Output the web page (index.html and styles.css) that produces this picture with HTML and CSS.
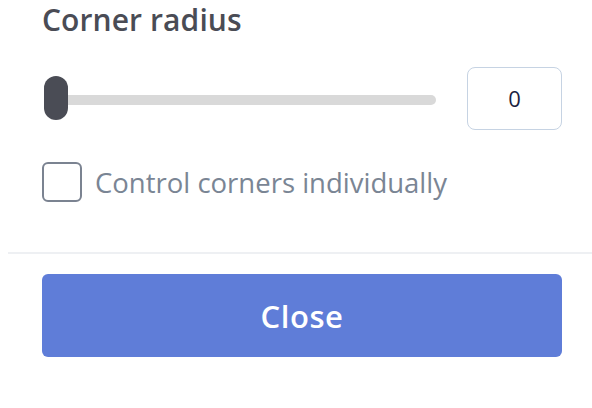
FILE: index.html
```html
<!DOCTYPE html>
<html>
<head>
<meta charset="utf-8">
<link rel="stylesheet" href="styles.css">
</head>
<body>
<div class="panel">
  <section class="section">
    <h2 class="title">Corner radius</h2>
    <div class="slider-row">
      <div class="slider">
        <div class="track"></div>
        <div class="thumb"></div>
      </div>
      <div class="num-input">0</div>
    </div>
    <label class="check-row">
      <span class="checkbox"></span>
      <span class="check-label">Control corners individually</span>
    </label>
  </section>
  <div class="divider"></div>
  <div class="footer">
    <button class="btn-close">Close</button>
  </div>
</div>
</body>
</html>
```

FILE: styles.css
```css
html, body {
  margin: 0;
  padding: 0;
  background: #ffffff;
}
body {
  font-family: "Open Sans", "Noto Sans", sans-serif;
  width: 592px;
  height: 408px;
  overflow: hidden;
}
.panel {
  padding-left: 8px;
}
.section {
  padding: 0 30px 0 34px;
}
.title {
  margin: 0;
  font-size: 30px;
  line-height: 40px;
  font-weight: 600;
  color: #4a4c55;
  letter-spacing: 0.1px;
}
.slider-row {
  display: flex;
  align-items: center;
  margin-top: 26px;
  height: 64px;
}
.slider {
  position: relative;
  width: 392px;
  height: 44px;
  margin-left: 2px;
  display: flex;
  align-items: center;
}
.track {
  width: 100%;
  height: 10px;
  margin-top: 3px;
  border-radius: 5px;
  background: #d9d9d9;
}
.thumb {
  position: absolute;
  left: 0;
  top: 0;
  width: 24px;
  height: 44px;
  border-radius: 12px;
  background: #4a4c55;
}
.num-input {
  margin-left: auto;
  width: 93px;
  height: 61px;
  box-sizing: content-box;
  border: 1.5px solid #c6d3e3;
  border-radius: 8px;
  display: flex;
  align-items: center;
  justify-content: center;
  font-size: 22px;
  color: #1d1f42;
}
.check-row {
  display: flex;
  align-items: center;
  margin-top: 32px;
  height: 40px;
}
.checkbox {
  width: 36px;
  height: 36px;
  border: 2px solid #7b8391;
  border-radius: 6px;
  flex: none;
}
.check-label {
  margin-left: 13px;
  font-size: 27.5px;
  color: #7a8594;
}
.divider {
  margin-top: 50px;
  height: 2px;
  background: #eef0f3;
}
.footer {
  padding: 20px 30px 0 34px;
}
.btn-close {
  display: block;
  width: 100%;
  height: 83px;
  border: none;
  border-radius: 6px;
  background: #5f7dd8;
  color: #ffffff;
  font-family: "Open Sans", "Noto Sans", sans-serif;
  font-size: 31px;
  font-weight: 600;
  letter-spacing: 0.6px;
  padding: 0;
}
```
